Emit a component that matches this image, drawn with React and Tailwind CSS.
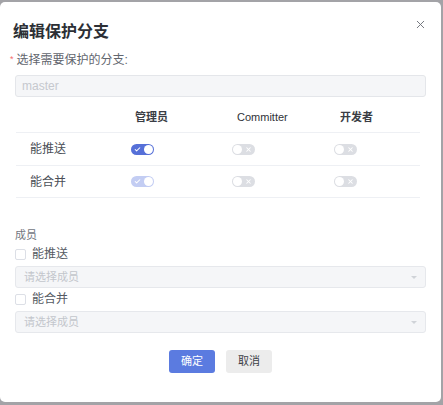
import { X, Check } from "lucide-react";

const font = { fontFamily: '"Liberation Sans", "Noto Sans CJK SC", sans-serif' };

function Toggle({ on, disabled }) {
  if (on) {
    return (
      <div className={`w-[23px] h-[11px] rounded-full flex items-center justify-between pl-[3px] pr-[1px] ${disabled ? "bg-[#c3cdf3]" : "bg-[#5670d8]"}`}>
        <Check size={7} strokeWidth={3.5} className="text-white" />
        <div className="w-[9px] h-[9px] rounded-full bg-white" />
      </div>
    );
  }
  return (
    <div className="w-[23px] h-[11px] rounded-full flex items-center justify-between pl-[1px] pr-[3px] bg-[#dcdee3]">
      <div className="w-[9px] h-[9px] rounded-full bg-white" />
      <X size={7} strokeWidth={3.5} className="text-white" />
    </div>
  );
}

const rows = [
  { name: "能推送", vals: [true, false, false], disabled: false, h: "h-[33px]" },
  { name: "能合并", vals: [true, false, false], disabled: true, h: "h-[32px]" },
];

function Select() {
  return (
    <div className="h-[22px] ml-[15px] mr-[15px] bg-[#f5f6f8] border border-[#e6e8ec] rounded-[3px] flex items-center justify-between pl-[8px] pr-[8px]">
      <span className="text-[11px] text-[#c3c6cc]">请选择成员</span>
      <span className="w-0 h-0 border-l-[3px] border-r-[3px] border-t-[3px] border-l-transparent border-r-transparent border-t-[#d0d3d8]" />
    </div>
  );
}

function Checkbox({ label }) {
  return (
    <div className="flex items-center ml-[15px] h-[12px]">
      <div className="w-[11px] h-[11px] border border-[#dcdfe6] rounded-[2px] bg-white" />
      <span className="ml-[6px] text-[12px] text-[#555a63]">{label}</span>
    </div>
  );
}

export default function App() {
  return (
    <div className="w-[443px] h-[405px] bg-[#a3a3a7] pt-[2px] pr-[2px] pb-[3px]" style={font}>
      <div className="relative h-full bg-white rounded-[5px] pt-[19px]">
        <X size={13} strokeWidth={1.75} className="absolute top-[16px] right-[14px] text-[#6f727a]" />
        <h1 className="pl-[13px] text-[16px] leading-[22px] font-bold text-[#2c2f35]">编辑保护分支</h1>

        <div className="mt-[9px] pl-[10px] h-[16px] flex items-center text-[12px] text-[#62666e]">
          <span className="text-[#f56c6c] text-[9px] mr-[3px]">*</span>
          <span>选择需要保护的分支:</span>
        </div>
        <div className="mt-[7px] h-[22px] ml-[15px] mr-[15px] bg-[#f5f6f8] border border-[#e4e6ea] rounded-[3px] flex items-center pl-[6px]">
          <span className="text-[12px] text-[#c5c8ce]">master</span>
        </div>

        <div className="mt-[6px] ml-[16px] mr-[21px]">
          <div className="h-[30px] flex items-center border-b border-[#eef0f4] text-[11px] font-bold text-[#3a3d44]">
            <div className="w-[118px]" />
            <div className="w-[101px] pl-[1px]">管理员</div>
            <div className="w-[102px] pl-[2px] font-normal text-[#2f3238]">Committer</div>
            <div className="pl-[3px]">开发者</div>
          </div>
          {rows.map((r) => (
            <div key={r.name} className={`${r.h} flex items-center border-b border-[#eef0f4]`}>
              <div className="w-[115px] pl-[14px] text-[12px] text-[#4a4e56]">{r.name}</div>
              <div className="w-[101px]"><Toggle on={r.vals[0]} disabled={r.disabled} /></div>
              <div className="w-[102px]"><Toggle on={r.vals[1]} /></div>
              <div><Toggle on={r.vals[2]} /></div>
            </div>
          ))}
        </div>

        <div className="mt-[29px] pl-[15px] h-[16px] flex items-center text-[11px] text-[#72767e]">成员</div>
        <div className="mt-[5px]"><Checkbox label="能推送" /></div>
        <div className="mt-[6px]"><Select /></div>
        <div className="mt-[5px]"><Checkbox label="能合并" /></div>
        <div className="mt-[6px]"><Select /></div>

        <div className="mt-[17px] flex justify-center gap-[11px]">
          <button className="w-[46px] h-[23px] rounded-[3px] bg-[#5b7be0] text-white text-[11px]">确定</button>
          <button className="w-[46px] h-[23px] rounded-[3px] bg-[#ececec] text-[#3d4047] text-[11px]">取消</button>
        </div>
      </div>
    </div>
  );
}
